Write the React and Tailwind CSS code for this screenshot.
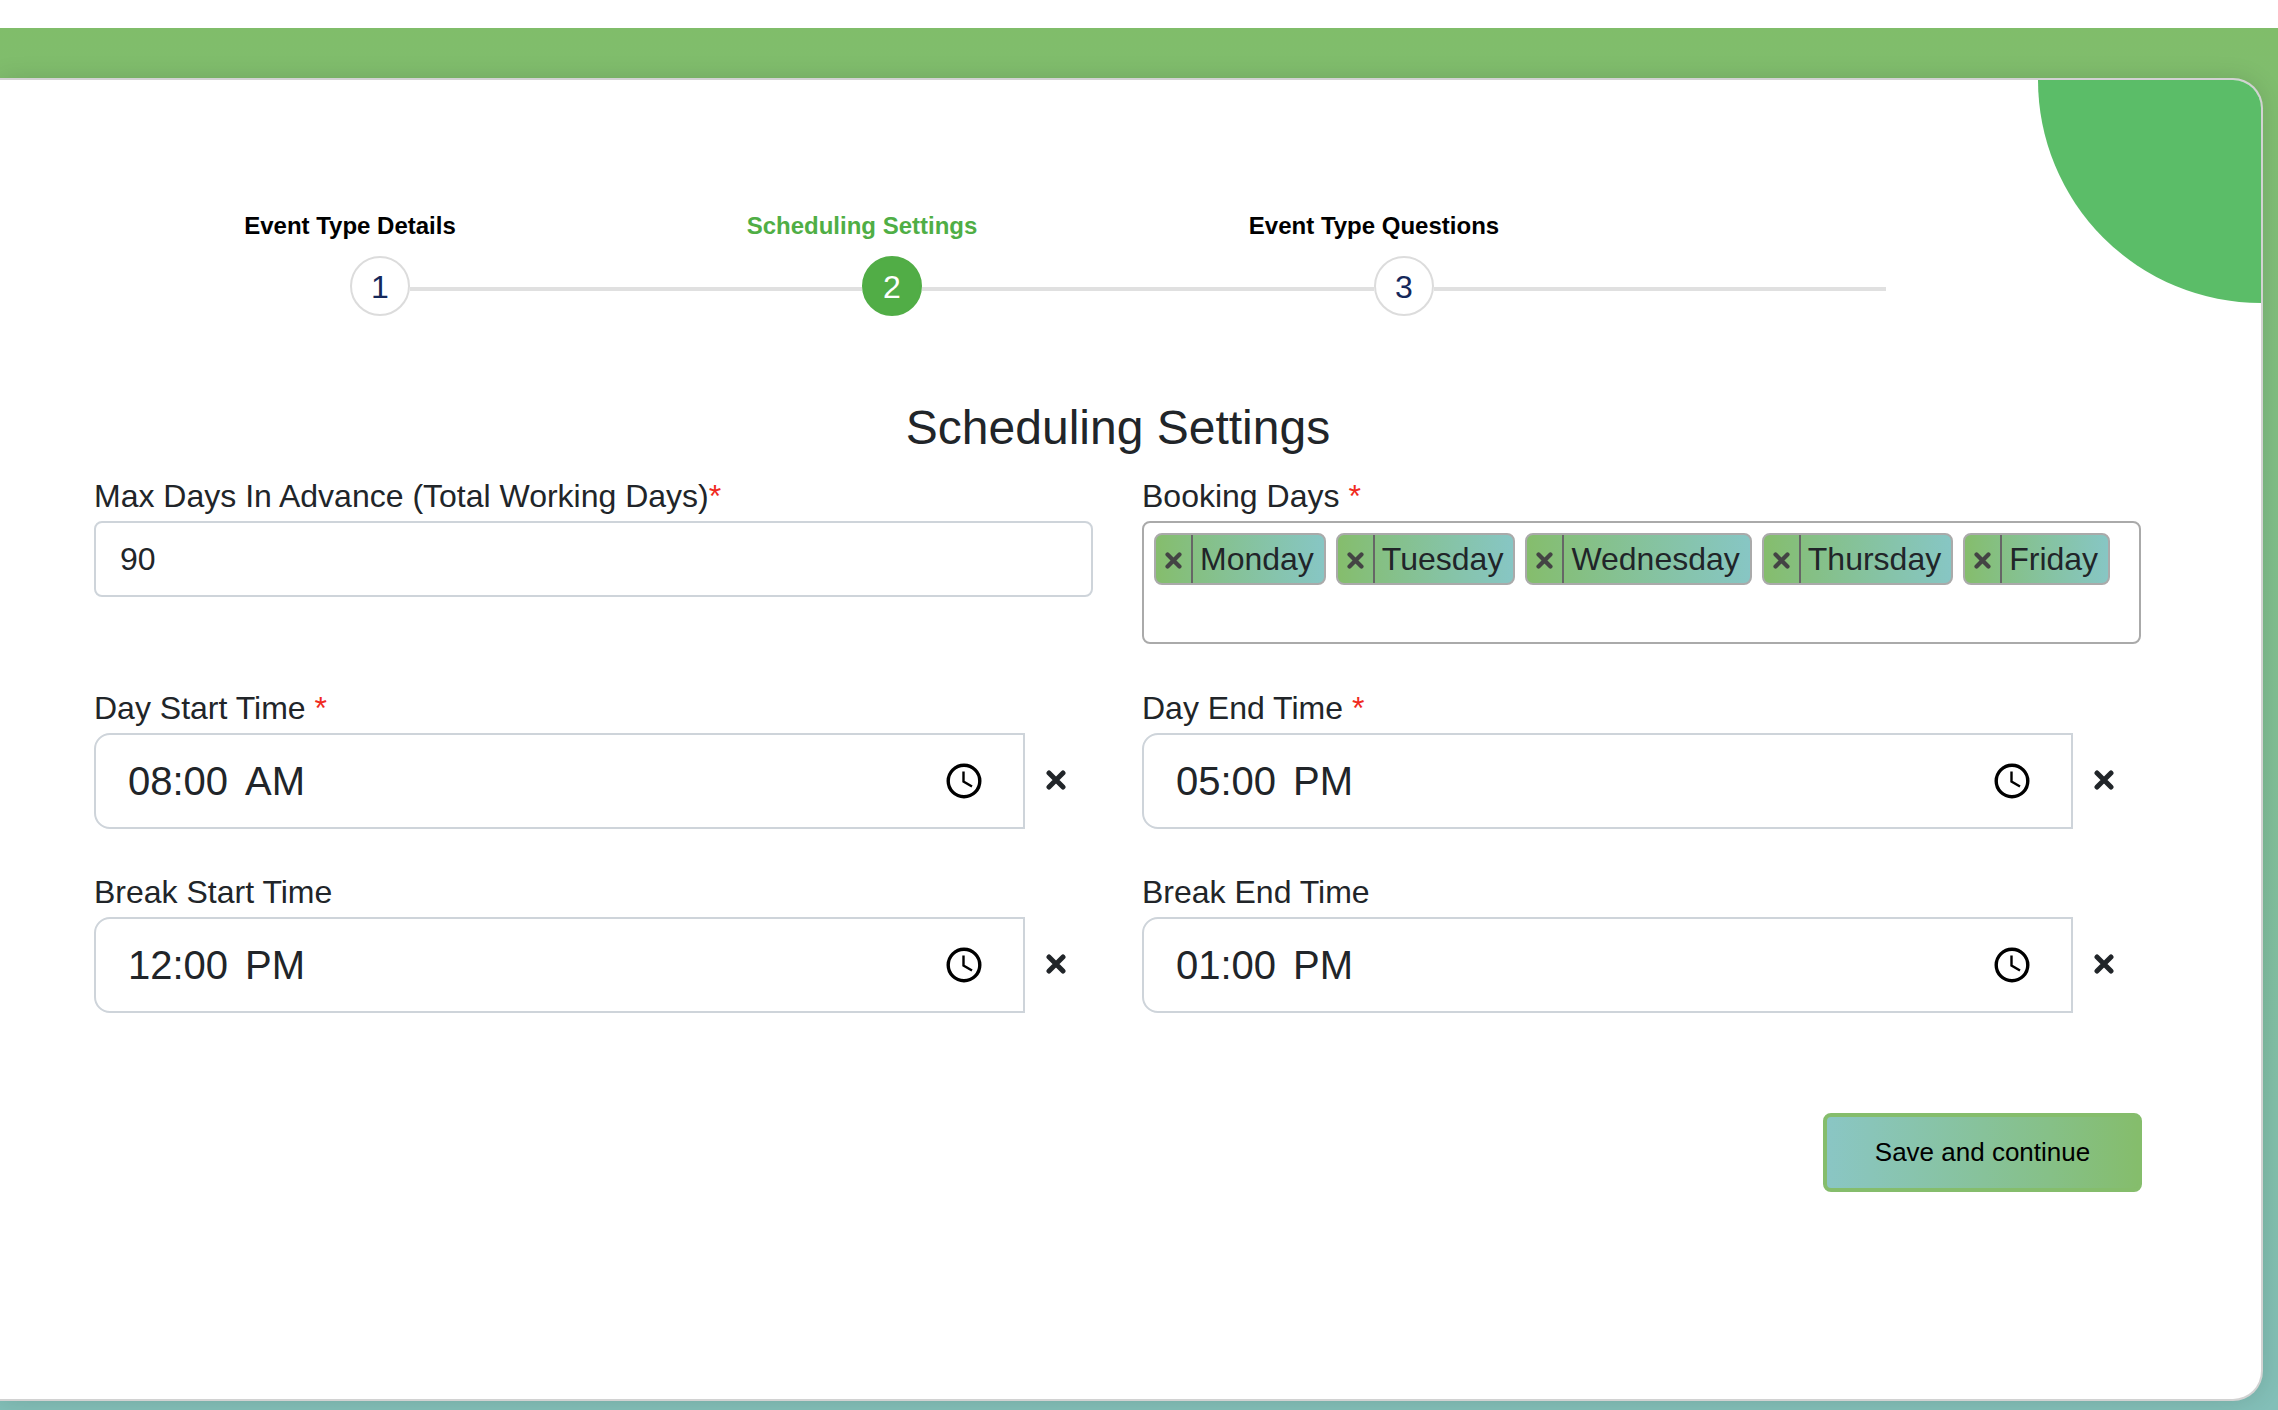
import React from 'react';

const font = { fontFamily: '"Liberation Sans", Arial, sans-serif' };

const steps = [
  { label: 'Event Type Details', number: 1 },
  { label: 'Scheduling Settings', number: 2, active: true },
  { label: 'Event Type Questions', number: 3 },
];

const days = ['Monday', 'Tuesday', 'Wednesday', 'Thursday', 'Friday'];

const ClockIcon = () => (
  <svg width="36" height="36" viewBox="0 0 36 36" fill="none" stroke="#000" strokeWidth="3.4">
    <circle cx="18" cy="18" r="15.8" />
    <path d="M17.5 8.5V18.5L26 23.5" strokeWidth="2.4" />
  </svg>
);

const CloseIcon = ({ size = 20, color = '#212529' }) => (
  <svg width={size} height={size} viewBox="0 0 20 20" fill="none" stroke={color} strokeWidth="5">
    <path d="M3 3L17 17M17 3L3 17" strokeLinecap="round" />
  </svg>
);

const Label = ({ text, required, tight }) => (
  <label className="block h-[40px] text-[32px] leading-[40px] text-[#212529]">
    {text}
    {required && <span className={`text-[#f02a1e] ${tight ? '' : 'ml-[9px]'}`}>*</span>}
  </label>
);

const TimeField = ({ label, hours, meridiem, required }) => (
  <div>
    <Label text={label} required={required} />
    <div className="mt-[5px] flex items-center">
      <div className="flex h-[96px] w-[931px] items-center justify-between rounded-l-[16px] border-2 border-[#ced4da] pl-[32px] pr-[41px]">
        <span className="text-[40px] text-[#212529]">
          {hours}
          <span className="ml-[17px]">{meridiem}</span>
        </span>
        <ClockIcon />
      </div>
      <button className="ml-[21px] flex -translate-y-px">
        <CloseIcon />
      </button>
    </div>
  </div>
);

const App = () => {
  return (
    <div className="h-[1410px] w-[2278px] overflow-hidden bg-white pt-[28px]" style={font}>
      <div className="h-[1382px] bg-gradient-to-b from-[#80bd6a] to-[#83bfb8] pb-[9px] pr-[15px] pt-[50px]">
        <div className="relative h-full overflow-hidden rounded-r-[30px] border-2 border-l-0 border-[#d2d2d2] bg-white pl-[94px] shadow-[0_0_24px_rgba(0,0,0,0.12)]">
          <div className="absolute right-0 top-0 h-[223px] w-[223px] rounded-bl-full bg-[#5bbd68]" />

          <div className="flex pt-[130px]">
            {steps.map((step) => (
              <div key={step.number} className="w-[512px] shrink-0">
                <div
                  className={`h-[32px] text-center text-[24px] font-bold leading-[32px] ${
                    step.active ? 'text-[#4fae45]' : 'text-black'
                  }`}
                >
                  {step.label}
                </div>
                <div className="ml-[256px] mt-[14px] flex items-center">
                  <div
                    className={`flex h-[60px] w-[60px] shrink-0 items-center justify-center rounded-full border-2 pt-[2px] text-[32px] ${
                      step.active
                        ? 'border-[#51ad46] bg-[#51ad46] text-white'
                        : 'border-[#dcdcdc] bg-white text-[#15285a]'
                    }`}
                  >
                    {step.number}
                  </div>
                  <div className="mt-[5px] h-[4px] w-[452px] shrink-0 bg-[#e0e0e0]" />
                </div>
              </div>
            ))}
          </div>

          <h2 className="mt-[84px] h-[56px] w-[2048px] text-center text-[48px] leading-[56px] text-[#212529]">
            Scheduling Settings
          </h2>

          <div className="mt-[20px] grid w-[2047px] grid-cols-[999px_999px] gap-x-[49px]">
            <div>
              <Label text="Max Days In Advance (Total Working Days)" required tight />
              <input
                readOnly
                value="90"
                className="mt-[5px] h-[76px] w-full rounded-[8px] border-2 border-[#ced4da] px-[24px] text-[32px] text-[#212529] outline-none"
              />
            </div>
            <div>
              <Label text="Booking Days" required />
              <div className="mt-[5px] flex h-[123px] items-start gap-x-[10px] rounded-[8px] border-2 border-[#aaaaaa] px-[10px] pt-[10px]">
                {days.map((day) => (
                  <div
                    key={day}
                    className="flex h-[52px] items-center rounded-[8px] border-2 border-[#aaaaaa] bg-gradient-to-r from-[#85bd6c] to-[#87c6c4] text-[32px] text-[#212529]"
                  >
                    <span className="flex h-full w-[37px] items-center justify-center border-r-2 border-[#666666] pt-[2px]">
                      <CloseIcon size={17} color="#444444" />
                    </span>
                    <span className="pl-[7px] pr-[10px]">{day}</span>
                  </div>
                ))}
              </div>
            </div>
          </div>

          <div className="mt-[44px] grid w-[2047px] grid-cols-[999px_999px] gap-x-[49px] gap-y-[43px]">
            <TimeField label="Day Start Time" hours="08:00" meridiem="AM" required />
            <TimeField label="Day End Time" hours="05:00" meridiem="PM" required />
            <TimeField label="Break Start Time" hours="12:00" meridiem="PM" />
            <TimeField label="Break End Time" hours="01:00" meridiem="PM" />
          </div>

          <div className="mt-[100px] flex w-[2048px] justify-end">
            <button className="h-[79px] w-[319px] rounded-[8px] border-4 border-[#85bd6c] bg-gradient-to-r from-[#8ac6c4] to-[#85bd6c] text-[26px] text-black">
              Save and continue
            </button>
          </div>
        </div>
      </div>
    </div>
  );
};

export default App;
